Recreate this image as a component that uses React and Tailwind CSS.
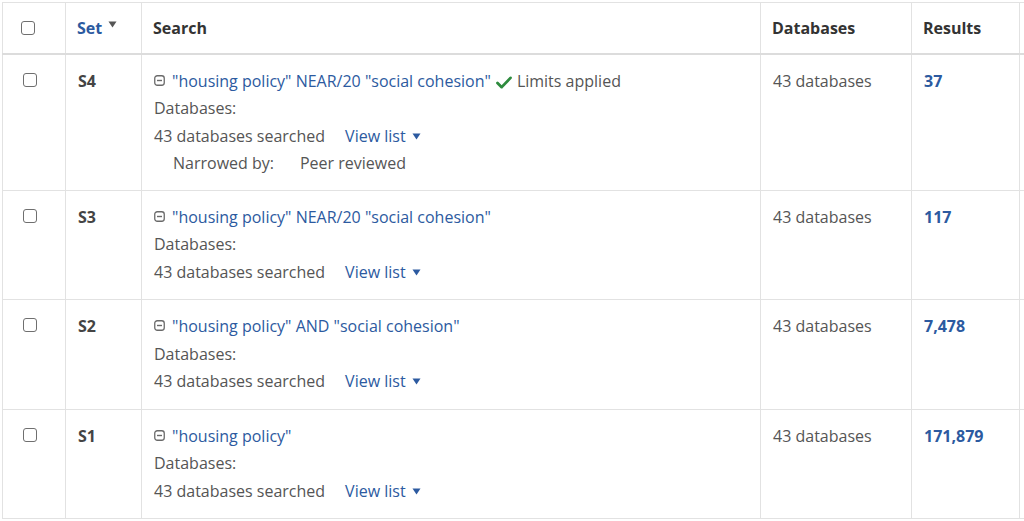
import React from "react";

const rows = [
  {
    id: "S4",
    query: '"housing policy" NEAR/20 "social cohesion"',
    limits: true,
    narrowed: "Peer reviewed",
    results: "37",
  },
  { id: "S3", query: '"housing policy" NEAR/20 "social cohesion"', results: "117" },
  { id: "S2", query: '"housing policy" AND "social cohesion"', results: "7,478" },
  { id: "S1", query: '"housing policy"', results: "171,879" },
];

const Checkbox = () => (
  <span className="block h-[14px] w-[14px] rounded-[3px] border border-[#6f6f6f] bg-white" />
);

const CollapseIcon = () => (
  <svg width="11" height="11" viewBox="0 0 11 11" className="mr-[7px] inline-block align-[1px]">
    <rect x="0.75" y="0.75" width="9.5" height="9.5" rx="2.5" fill="none" stroke="#6a6a6a" strokeWidth="1.3" />
    <line x1="3" y1="5.5" x2="8" y2="5.5" stroke="#6a6a6a" strokeWidth="1.4" />
  </svg>
);

const Caret = ({ color = "#2c5aa0", cls = "ml-[6px] align-[2px]" }) => (
  <svg width="9" height="7" viewBox="0 0 9 7" className={`inline-block ${cls}`}>
    <path d="M0.5 0.5 H8.5 L4.5 6.5 Z" fill={color} />
  </svg>
);

const Check = () => (
  <svg width="16" height="13" viewBox="0 0 17 14" className="mx-[5px] inline-block align-[-2px]">
    <path d="M1.5 7.5 L6 12 L15.5 2" fill="none" stroke="#2e8b3e" strokeWidth="3" strokeLinecap="round" strokeLinejoin="round" />
  </svg>
);

export default function App() {
  return (
    <div
      className="h-[521px] w-[1024px] overflow-hidden bg-white pl-[2px] pt-[2px] text-[16px] text-[#555555]"
      style={{ fontFamily: "'Open Sans', 'Liberation Sans', sans-serif" }}
    >
      <table className="w-[1040px] table-fixed border-collapse">
        <colgroup>
          <col className="w-[63px]" />
          <col className="w-[76px]" />
          <col className="w-[619px]" />
          <col className="w-[151px]" />
          <col className="w-[108px]" />
          <col />
        </colgroup>
        <thead>
          <tr className="h-[51px]">
            <th className="border border-b-2 border-[#e2e2e2] border-b-[#dcdcdc] pl-[18px] align-middle">
              <Checkbox />
            </th>
            <th className="border border-b-2 border-[#e2e2e2] border-b-[#dcdcdc] px-[11px] text-left font-bold text-[#2c5aa0]">
              Set
              <Caret color="#555555" cls="ml-[6px] align-[6px]" />
            </th>
            <th className="border border-b-2 border-[#e2e2e2] border-b-[#dcdcdc] px-[11px] text-left font-bold text-[#333333]">Search</th>
            <th className="border border-b-2 border-[#e2e2e2] border-b-[#dcdcdc] px-[11px] text-left font-bold text-[#333333]">Databases</th>
            <th className="border border-b-2 border-[#e2e2e2] border-b-[#dcdcdc] px-[11px] text-left font-bold text-[#333333]">Results</th>
            <th className="border border-b-2 border-[#e2e2e2] border-b-[#dcdcdc]" />
          </tr>
        </thead>
        <tbody>
          {rows.map((r) => (
            <tr key={r.id} className="align-top">
              <td className="border border-[#e2e2e2] pl-[20px] pt-[18px]">
                <Checkbox />
              </td>
              <td className="border border-[#e2e2e2] px-[12px] pt-[13px] font-bold leading-[27.5px] text-[#444444]">{r.id}</td>
              <td
                className={`border border-[#e2e2e2] px-[12px] pt-[13px] leading-[27.5px] ${
                  r.narrowed ? "pb-[12px]" : "pb-[13px]"
                }`}
              >
                <div>
                  <CollapseIcon />
                  <span className="text-[#2c5aa0]">{r.query}</span>
                  {r.limits && (
                    <>
                      <Check />
                      <span>Limits applied</span>
                    </>
                  )}
                </div>
                <div>Databases:</div>
                <div>
                  43 databases searched
                  <span className="ml-[20px] text-[#2c5aa0]">View list</span>
                  <Caret />
                </div>
                {r.narrowed && (
                  <div className="pl-[19px]">
                    Narrowed by:<span className="ml-[26px]">{r.narrowed}</span>
                  </div>
                )}
              </td>
              <td className="border border-[#e2e2e2] px-[12px] pt-[13px] leading-[27.5px]">43 databases</td>
              <td className="border border-[#e2e2e2] px-[12px] pt-[13px] font-bold leading-[27.5px] text-[#2c5aa0]">{r.results}</td>
              <td className="border border-[#e2e2e2]" />
            </tr>
          ))}
        </tbody>
      </table>
    </div>
  );
}
